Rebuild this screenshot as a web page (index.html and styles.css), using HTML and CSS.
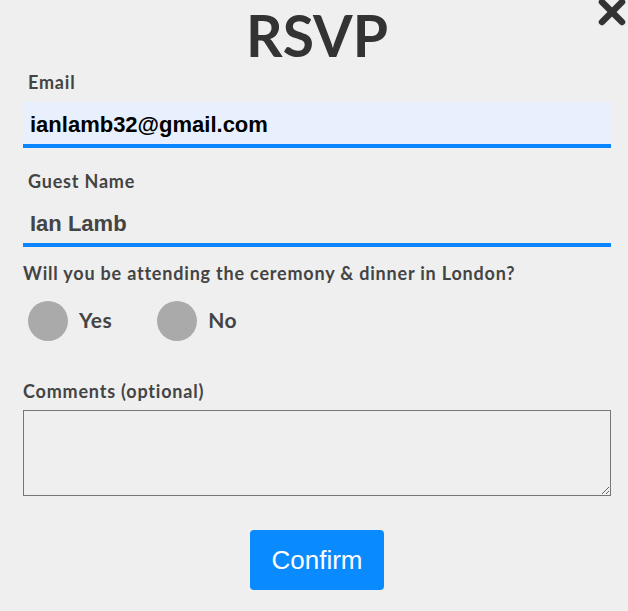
FILE: index.html
```html
<!DOCTYPE html>
<html>
<head>
<meta charset="utf-8">
<link rel="stylesheet" href="styles.css">
</head>
<body>
<div class="modal">
  <button class="close" type="button" aria-label="Close">
    <svg width="28" height="28" viewBox="0 0 28 28"><path d="M4 3 L24 23 M24 3 L4 23" stroke="#333" stroke-width="6.5" stroke-linecap="round" fill="none"/></svg>
  </button>
  <h1 class="title">RSVP</h1>
  <form class="form">
    <div class="field">
      <label class="label label-inset" for="email">Email</label>
      <input class="input input-filled" id="email" type="text" value="ianlamb32@gmail.com">
    </div>
    <div class="field">
      <label class="label label-inset" for="name">Guest Name</label>
      <input class="input input-name" id="name" type="text" value="Ian Lamb">
    </div>
    <div class="question">Will you be attending the ceremony &amp; dinner in London?</div>
    <div class="radios">
      <label class="radio"><span class="dot"></span><span class="radio-text">Yes</span></label>
      <label class="radio"><span class="dot"></span><span class="radio-text">No</span></label>
    </div>
    <label class="label label-comments" for="comments">Comments (optional)</label>
    <textarea class="comments" id="comments"></textarea>
    <div class="actions">
      <button class="confirm" type="button">Confirm</button>
    </div>
  </form>
</div>
</body>
</html>
```
FILE: styles.css
```css
html, body {
  margin: 0;
  padding: 0;
  background: #efefef;
}
.modal {
  position: relative;
  width: 628px;
  height: 611px;
  font-family: Lato, "Noto Sans", sans-serif;
  color: #444;
}
.close {
  position: absolute;
  top: -1px;
  right: 2px;
  border: 0;
  background: none;
  padding: 0;
  line-height: 0;
}
.title {
  margin: 0;
  text-align: center;
  font-size: 57px;
  line-height: 70px;
  font-weight: 700;
  color: #333;
  padding-left: 6px;
}
.form {
  padding: 0 17px 0 23px;
}
.field {
  display: flex;
  flex-direction: column;
}
.label {
  display: block;
  font-size: 18px;
  font-weight: 700;
  line-height: 24px;
  letter-spacing: 0.8px;
  color: #444;
}
.label-inset {
  padding-left: 5px;
}
.input {
  box-sizing: border-box;
  width: 588px;
  height: 46px;
  border: 0;
  border-bottom: 4px solid #0a84ff;
  margin-top: 8px;
  padding: 4px 7px 0;
  font-family: "Liberation Sans", Arial, sans-serif;
  font-size: 22px;
  font-weight: 700;
  outline: none;
}
.input-filled {
  background: #e8f0fe;
  color: #000;
}
.input-name {
  background: transparent;
  color: #444;
}
.field + .field {
  margin-top: 21px;
}
.question {
  margin-top: 14px;
  font-size: 18px;
  font-weight: 700;
  line-height: 24px;
  letter-spacing: 0.8px;
}
.radios {
  display: flex;
  gap: 45px;
  padding-left: 5px;
  margin-top: 16px;
}
.radio {
  display: flex;
  align-items: center;
  gap: 11px;
}
.dot {
  width: 40px;
  height: 40px;
  border-radius: 50%;
  background: #aaa;
}
.radio-text {
  font-size: 21px;
  font-weight: 700;
  letter-spacing: 0.5px;
  color: #444;
  margin-top: -3px;
}
.label-comments {
  margin-top: 38px;
}
.comments {
  display: block;
  box-sizing: border-box;
  width: 588px;
  height: 86px;
  margin-top: 7px;
  border: 1px solid #767676;
  background: #efefef;
}
.actions {
  display: flex;
  justify-content: center;
  margin-top: 34px;
}
.confirm {
  width: 134px;
  height: 60px;
  border: 0;
  border-radius: 4px;
  background: #0a8aff;
  color: #fff;
  font-family: "Liberation Sans", Arial, sans-serif;
  font-size: 26px;
}
```
